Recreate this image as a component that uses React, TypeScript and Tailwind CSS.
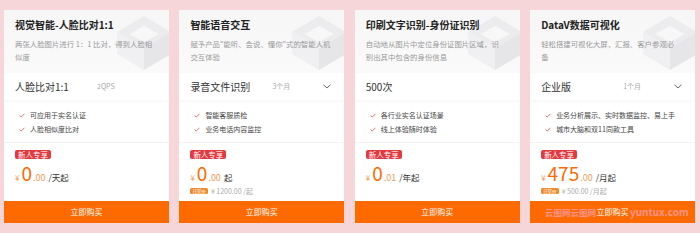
import React from 'react'

interface Product {
	title: string
	desc: string[]
	spec: string
	unit?: string
	dropdown?: boolean
	features: string[]
	int: string
	dec: string
	per: string
	regular?: string
}

const PRODUCTS: Product[] = [
	{
		title: '视觉智能-人脸比对1:1',
		desc: ['两张人脸图片进行 1：1 比对，得到人脸相', '似度'],
		spec: '人脸比对1:1',
		unit: '2QPS',
		features: ['可应用于实名认证', '人脸相似度比对'],
		int: '0',
		dec: '.00',
		per: '/天起',
	},
	{
		title: '智能语音交互',
		desc: ['赋予产品"能听、会说、懂你"式的智能人机', '交互体验'],
		spec: '录音文件识别',
		unit: '3个月',
		dropdown: true,
		features: ['智能客服质检', '业务电话内容监控'],
		int: '0',
		dec: '.00',
		per: '起',
		regular: '¥ 1200.00 /起',
	},
	{
		title: '印刷文字识别-身份证识别',
		desc: ['自动地从图片中定位身份证图片区域，识', '别出其中包含的身份信息'],
		spec: '500次',
		features: ['各行业实名认证场景', '线上体验随时体验'],
		int: '0',
		dec: '.01',
		per: '/年起',
	},
	{
		title: 'DataV数据可视化',
		desc: ['轻松搭建可视化大屏，汇报、客户参观必', '备'],
		spec: '企业版',
		unit: '1个月',
		dropdown: true,
		features: ['业务分析展示、实时数据监控、易上手', '城市大脑和双11同款工具'],
		int: '475',
		dec: '.00',
		per: '/月起',
		regular: '¥ 500.00 /月起',
	},
]

function Cube() {
	return (
		<svg width="62" height="62" viewBox="0 0 62 62" className="absolute right-[-6px] top-[2px]" fill="none">
			<path d="M31 4 L58 20 L31 36 L4 20 Z" fill="#ececee" />
			<path d="M4 20 L31 36 L31 58 L4 42 Z" fill="#f0f0f2" />
			<path d="M58 20 L31 36 L31 58 L58 42 Z" fill="#e6e6e9" />
			<path d="M31 14 L46 22 L31 30 L16 22 Z" fill="#f7f7f8" />
		</svg>
	)
}

function Check() {
	return (
		<svg width="6" height="5" viewBox="0 0 6 5" fill="none" className="shrink-0">
			<polyline points="0.6,2.6 2.2,4.1 5.4,0.8" stroke="#e0656a" strokeWidth="0.9" />
		</svg>
	)
}

function Card({ p }: { p: Product }) {
	return (
		<div className="flex h-[213px] flex-col overflow-hidden bg-white">
			<div className="relative h-[63px] overflow-hidden bg-gradient-to-b from-[#f6f6f7] to-[#fafafa] px-[11px] pt-[9px]">
				<Cube />
				<div className="relative text-[10px] font-bold leading-[12px] text-[#222]">{p.title}</div>
				<div className="relative mt-[6px] text-[7.4px] leading-[13px] text-[#999]">
					{p.desc.map((line) => (
						<div key={line} className="whitespace-nowrap">
							{line}
						</div>
					))}
				</div>
			</div>
			<div className="flex h-[27px] items-center px-[11px] shadow-[0_2px_3px_rgba(0,0,0,0.03)]">
				<span className="w-[82px] text-[10px] text-[#333]">{p.spec}</span>
				{p.unit && <span className="text-[7px] text-[#aaa]">{p.unit}</span>}
				{p.dropdown && (
					<svg width="8" height="5" viewBox="0 0 8 5" className="ml-auto mr-[2px]" fill="none">
						<polyline points="0.5,0.8 4,4 7.5,0.8" stroke="#555" strokeWidth="0.9" />
					</svg>
				)}
			</div>
			<div className="flex h-[43px] flex-col border-b border-[#f3f3f3] px-[15px] pt-[8px]">
				{p.features.map((f) => (
					<div key={f} className="flex h-[14px] items-center gap-[5px] whitespace-nowrap text-[7px] text-[#444]">
						<Check />
						<span>{f}</span>
					</div>
				))}
			</div>
			<div className="flex flex-1 flex-col px-[11px] pt-[7px]">
				<div className="flex">
					<span className="rounded-[2px] bg-[#e23a3f] px-[3px] text-[7.5px] leading-[9px] text-white">新人专享</span>
				</div>
				<div className="mt-[3px] flex items-baseline text-[#ff6a00]">
					<span className="mr-[2px] text-[8px] text-[#f39a55]">¥</span>
					<span className="text-[19px] leading-[22px]">{p.int}</span>
					<span className="ml-[1px] text-[9px] text-[#f39a55]">{p.dec}</span>
					<span className="ml-[3px] text-[8.5px] text-[#333]">{p.per}</span>
				</div>
				{p.regular && (
					<div className="mt-[1px] flex items-center gap-[3px]">
						<span className="whitespace-nowrap rounded-[1.5px] bg-[#f08a2c] px-[2px] text-[4.5px] leading-[6px] text-white">日常价</span>
						<span className="text-[7px] text-[#aaa]">{p.regular}</span>
					</div>
				)}
			</div>
			<div className="relative flex h-[22px] items-center justify-center bg-[#ff6a00] text-[8px] text-white">
				立即购买
			</div>
		</div>
	)
}

export default function App() {
	return (
		<div
			className="relative h-[233px] w-[700px] overflow-hidden bg-[#f6d6d9] pl-[4px] pr-[5px] pt-[10px]"
			style={{ fontFamily: '"Noto Sans CJK SC", "Noto Sans", sans-serif' }}
		>
			<div className="grid grid-cols-4 gap-[10.5px]">
				{PRODUCTS.map((p) => (
					<Card key={p.title} p={p} />
				))}
			</div>
			<span className="absolute left-[545px] top-[206px] whitespace-nowrap text-[8.5px] font-bold text-[#ff9eb0] opacity-80">
				云图网云图网
			</span>
			<span className="absolute left-[630px] top-[204px] whitespace-nowrap text-[10px] font-bold text-[#ff9eb0] opacity-80">
				yuntux.com
			</span>
		</div>
	)
}
